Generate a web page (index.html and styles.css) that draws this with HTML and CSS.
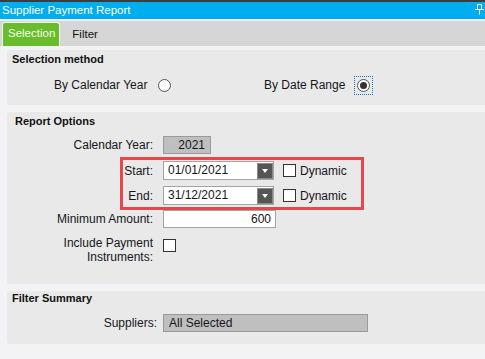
FILE: index.html
```html
<!DOCTYPE html>
<html lang="en">

<head>
    <meta charset="UTF-8">
    <title>Supplier Payment Report</title>
    <link rel="stylesheet" href="styles.css">
</head>

<body>
    <div class="topline"></div>
    <div class="titlebar">
        <span>Supplier Payment Report</span>
        <svg class="pin" width="9" height="11" viewBox="0 0 9 11">
            <path d="M2.5 0.5h4v5h-4z M0 5.5h9 M4.5 5.5v5" stroke="#fff" stroke-width="1" fill="none"/>
        </svg>
    </div>
    <div class="tabs">
        <div class="tab active">Selection</div>
        <div class="tab">Filter</div>
    </div>

    <main class="content">
        <!-- Selection method -->
        <section class="panel method">
            <h2>Selection method</h2>
            <div class="radios">
                <div class="radio-opt">
                    <span>By Calendar Year</span>
                    <span class="radio"></span>
                </div>
                <div class="radio-opt">
                    <span>By Date Range</span>
                    <span class="focus"><span class="radio checked"></span></span>
                </div>
            </div>
        </section>

        <!-- Report options -->
        <section class="panel options">
            <h2>Report Options</h2>
            <div class="row year-row">
                <label>Calendar Year:</label>
                <div class="field readonly year">2021</div>
            </div>
            <div class="row start-row">
                <label>Start:</label>
                <div class="date-field">
                    <div class="field date">01/01/2021<span class="drop"></span></div>
                    <span class="check"></span>
                    <span class="check-label">Dynamic</span>
                </div>
            </div>
            <div class="row end-row">
                <label>End:</label>
                <div class="date-field">
                    <div class="field date">31/12/2021<span class="drop"></span></div>
                    <span class="check"></span>
                    <span class="check-label">Dynamic</span>
                </div>
            </div>
            <div class="row amount-row">
                <label>Minimum Amount:</label>
                <div class="field amount">600</div>
            </div>
            <div class="row include-row">
                <label>Include Payment<br>Instruments:</label>
                <span class="check"></span>
            </div>
            <div class="highlight"></div>
        </section>

        <!-- Filter summary -->
        <section class="panel summary">
            <h2>Filter Summary</h2>
            <div class="row suppliers-row">
                <label>Suppliers:</label>
                <div class="field readonly suppliers">All Selected</div>
            </div>
        </section>
    </main>
</body>

</html>
```

FILE: styles.css
```css
body {
    margin: 0;
    padding: 0;
    background-color: #f3f3f5;
    font-family: "Liberation Sans", Arial, sans-serif;
    font-size: 12px;
    color: #151520;
}

.topline {
    height: 2px;
    background-color: #3c3c3c;
}

.titlebar {
    height: 17px;
    background-color: #00aeef;
    color: #fff;
    font-size: 11.5px;
    line-height: 17px;
    padding-left: 2px;
    display: flex;
    justify-content: space-between;
    align-items: center;
    border-bottom: 2px solid #f0f0f0;
}

.pin {
    margin-right: 1px;
    margin-top: -2px;
}

.tabs {
    height: 25px;
    background-color: #d6d6d6;
    display: flex;
    align-items: flex-end;
    padding-left: 2px;
}

.tab {
    font-size: 11.5px;
    height: 22px;
    line-height: 21px;
    padding: 0 8px;
    color: #111;
}

.tab.active {
    background-color: #69bd2c;
    color: #f4fff0;
    border: 1px solid #f2f2f2;
    border-bottom: none;
    border-radius: 3px 3px 0 0;
    padding: 0 4px 0 5px;
    height: 23px;
    margin-right: 4px;
}

.content {
    padding: 4px 0 0 7px;
    display: flex;
    flex-direction: column;
    gap: 7px;
}

.panel {
    background-color: #e9e9e9;
    border-radius: 3px 0 0 3px;
    position: relative;
}

.panel h2 {
    margin: 0;
    font-size: 11px;
    font-weight: bold;
    line-height: 14px;
    padding-left: 5px;
    color: #111;
}

/* selection method */
.method {
    height: 55px;
    padding-top: 2px;
    box-sizing: border-box;
}

.radios {
    display: flex;
    margin-top: 10px;
    padding-left: 47px;
}

.radio-opt {
    width: 210px;
    height: 18px;
    display: flex;
    align-items: center;
}

.radio-opt > span:first-child {
    margin-right: 11px;
}

.radio {
    width: 11px;
    height: 11px;
    border: 1px solid #555;
    border-radius: 50%;
    background-color: #fff;
    position: relative;
    display: inline-block;
}

.radio.checked::after {
    content: "";
    position: absolute;
    left: 2px;
    top: 2px;
    width: 7px;
    height: 7px;
    border-radius: 50%;
    background-color: #333;
}

.focus {
    margin-left: -2px;
    padding: 2px;
    border: 1px dotted #1a6fd8;
    display: flex;
}

/* report options */
.options {
    height: 172px;
    padding-top: 2px;
    box-sizing: border-box;
}

.options h2 {
    padding-left: 8px;
}

.row {
    display: grid;
    grid-template-columns: 146px auto;
    column-gap: 10px;
    align-items: center;
}

.row label {
    text-align: right;
    line-height: 14px;
}

.year-row {
    margin-top: 8px;
}

.start-row {
    margin-top: 7px;
}

.end-row {
    margin-top: 6px;
}

.amount-row {
    margin-top: 5px;
}

.include-row {
    margin-top: 8px;
    align-items: start;
}

.include-row .check {
    margin-top: 3px;
}

.field {
    height: 18px;
    box-sizing: border-box;
    border: 1px solid #a3a3a3;
    background-color: #fff;
    line-height: 16px;
    padding: 0 6px;
}

.readonly {
    background-color: #bfbfbf;
    border-color: #9a9a9a;
}

.year {
    width: 48px;
    text-align: right;
    padding-right: 5px;
}

.date-field {
    display: flex;
    align-items: center;
}

.field.date {
    width: 111px;
    height: 19px;
    line-height: 17px;
    padding: 0 0 0 4px;
    display: flex;
    justify-content: space-between;
    align-items: center;
}

.drop {
    width: 16px;
    height: 16px;
    box-sizing: border-box;
    border: 1px solid #8a8a8a;
    background-color: #555;
    position: relative;
}

.drop::after {
    content: "";
    position: absolute;
    left: 4px;
    top: 5px;
    border-left: 3px solid transparent;
    border-right: 3px solid transparent;
    border-top: 4px solid #fff;
}

.check {
    width: 11px;
    height: 11px;
    border: 1px solid #333;
    background-color: #fff;
    display: inline-block;
}

.date-field .check {
    margin-left: 9px;
}

.check-label {
    margin-left: 4px;
}

.amount {
    width: 113px;
    text-align: right;
    padding-right: 4px;
}

.highlight {
    position: absolute;
    left: 113px;
    top: 45px;
    width: 238px;
    height: 47px;
    border: 3px solid #e5474b;
}

/* filter summary */
.summary {
    height: 53px;
    padding-top: 1px;
    box-sizing: border-box;
}

.summary h2 {
    line-height: 13px;
}

.suppliers-row {
    grid-template-columns: 150px auto;
    column-gap: 6px;
    margin-top: 9px;
}

.suppliers {
    width: 205px;
    padding-left: 5px;
}
```
